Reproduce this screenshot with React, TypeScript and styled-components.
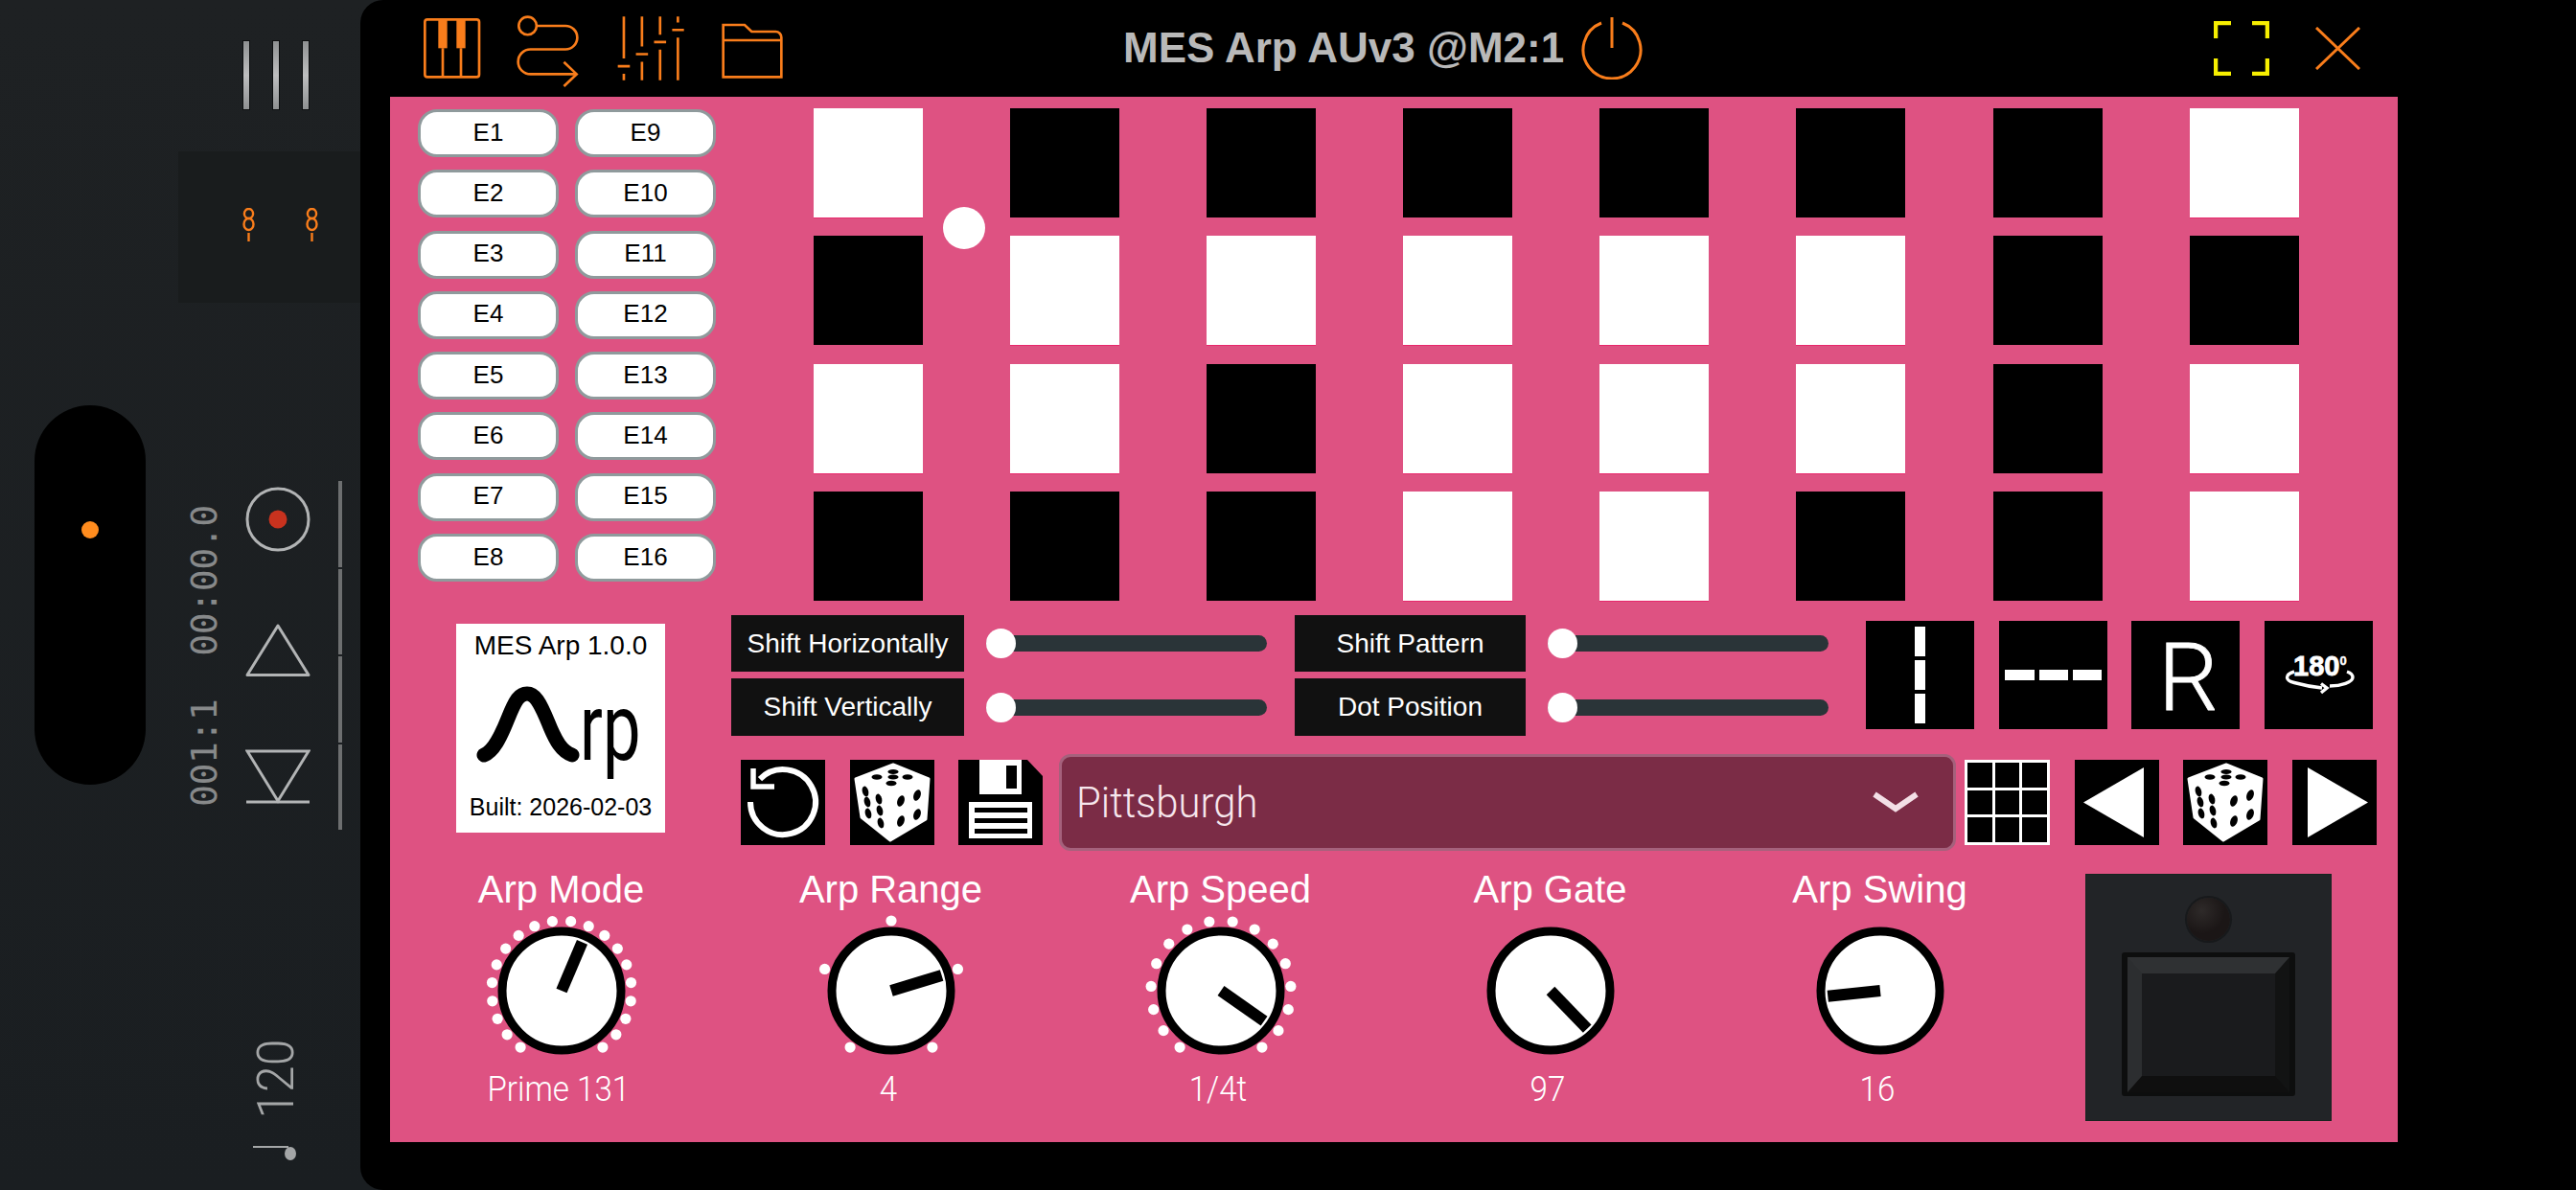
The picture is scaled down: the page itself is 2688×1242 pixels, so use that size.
import styled, { createGlobalStyle } from 'styled-components';

const PINK = '#de5282';
const ORANGE = '#f97d1b';

const GlobalStyle = createGlobalStyle`
  html, body {
    margin: 0;
    width: 2688px;
    height: 1242px;
    overflow: hidden;
    background: #1c2023;
    font-family: "Liberation Sans", Arial, sans-serif;
  }
`;

const PATTERN = ['WBBBBBBW', 'BWWWWWBB', 'WWBWWWBW', 'BBBWWBBW'];

const KNOBS = [
  { title: 'Arp Mode', value: 'Prime 131', angle: 23, dots: 20 },
  { title: 'Arp Range', value: '4', angle: 73, dots: 5 },
  { title: 'Arp Speed', value: '1/4t', angle: 125, dots: 16 },
  { title: 'Arp Gate', value: '97', angle: 136, dots: 0 },
  { title: 'Arp Swing', value: '16', angle: -96, dots: 0 },
];

const Knob = ({ angle, dots }: { angle: number; dots: number }) => {
  const spots = Array.from({ length: dots }, (_, i) => {
    const a = ((-144 + (288 * i) / (dots - 1)) * Math.PI) / 180;
    return { x: 73 * Math.sin(a), y: -73 * Math.cos(a) };
  });
  return (
    <svg width="160" height="160" viewBox="-80 -80 160 160">
      {spots.map(s => (
        <circle key={`${s.x}-${s.y}`} cx={s.x} cy={s.y} r="5.6" fill="#fff" />
      ))}
      <circle r="62" fill="#fff" stroke="#000" strokeWidth="9" />
      <rect x="-6" y="-55" width="12" height="55" fill="#000" transform={`rotate(${angle})`} />
    </svg>
  );
};

const Dice = () => (
  <svg width="88" height="89" viewBox="0 0 88 89">
    <path d="M45 5 L82 20 L79 62 L42 84 L12 60 L6 20 Z" fill="#fff" stroke="#fff" strokeWidth="3" strokeLinejoin="round" />
    <g fill="#000">
      <ellipse cx="28" cy="18" rx="5.5" ry="2.8" />
      <ellipse cx="45" cy="12.5" rx="5.5" ry="2.6" />
      <ellipse cx="45" cy="18" rx="5.5" ry="2.6" />
      <ellipse cx="60" cy="18" rx="5.5" ry="2.8" />
      <ellipse cx="43" cy="24.5" rx="5.5" ry="2.8" />
      <ellipse cx="16" cy="33" rx="3.2" ry="5.5" transform="rotate(-15 16 33)" />
      <ellipse cx="30" cy="41" rx="3.2" ry="5.5" transform="rotate(-15 30 41)" />
      <ellipse cx="18" cy="44" rx="3.2" ry="5.5" transform="rotate(-15 18 44)" />
      <ellipse cx="31" cy="53" rx="3.2" ry="5.5" transform="rotate(-15 31 53)" />
      <ellipse cx="19" cy="56" rx="3.2" ry="5.5" transform="rotate(-15 19 56)" />
      <ellipse cx="32" cy="66" rx="3.2" ry="5.5" transform="rotate(-15 32 66)" />
      <ellipse cx="70" cy="37" rx="3.6" ry="6" transform="rotate(20 70 37)" />
      <ellipse cx="53" cy="43" rx="3.6" ry="6" transform="rotate(20 53 43)" />
      <ellipse cx="70" cy="57" rx="3.6" ry="6" transform="rotate(20 70 57)" />
      <ellipse cx="53" cy="64" rx="3.6" ry="6" transform="rotate(20 53 64)" />
    </g>
  </svg>
);

const LoopIcon = () => (
  <svg width="13" height="35" viewBox="0 0 13 35" fill="none" stroke={ORANGE} strokeWidth="2.4">
    <ellipse cx="6.5" cy="6" rx="4.6" ry="5" />
    <ellipse cx="6.5" cy="17" rx="5" ry="6" />
    <path d="M6.5 26 V35" />
  </svg>
);

const App = () => {
  return (
    <Page>
      <GlobalStyle />
      <Sidebar>
        <PillColumn>
          <Pill>
            <PillDot />
          </Pill>
        </PillColumn>
        <SideColumn>
          <HandleBars>
            <HandleBar />
            <HandleBar />
            <HandleBar />
          </HandleBars>
          <LoopBox>
            <LoopIcon />
            <LoopIcon />
          </LoopBox>
          <TransportRow>
            <TimeText>{'001:1  00:00.0'}</TimeText>
            <TransportIcons>
              <svg width="68" height="68" viewBox="0 0 68 68" fill="none" stroke="#b2b4b5" strokeWidth="3">
                <circle cx="34" cy="34" r="32" />
                <circle cx="34" cy="34" r="9.5" fill="#c8321e" stroke="none" />
              </svg>
              <svg width="68" height="56" viewBox="0 0 68 56" fill="none" stroke="#b2b4b5" strokeWidth="3">
                <path d="M34 2 L66 53.5 H2 Z" strokeLinejoin="round" />
              </svg>
              <svg width="68" height="57" viewBox="0 0 68 57" fill="none" stroke="#b2b4b5" strokeWidth="3">
                <path d="M2 2 H66 L34 54 Z" />
                <path d="M1 55 H67" />
              </svg>
            </TransportIcons>
            <TrackLine>
              <TrackSegment />
              <TrackSegment />
              <TrackSegment />
              <TrackSegment />
            </TrackLine>
          </TransportRow>
          <Tempo>
            <TempoText>120</TempoText>
            <svg width="46" height="16" viewBox="0 0 46 16" fill="#a4a6a7">
              <rect x="0" y="0" width="37" height="2" />
              <ellipse cx="39" cy="8" rx="6" ry="7" />
            </svg>
          </Tempo>
        </SideColumn>
      </Sidebar>

      <Plugin>
        <Header>
          <HeaderIcon $left={64} $top={17}>
            <svg width="64" height="66" viewBox="30 28 192 198" fill="none" stroke={ORANGE} strokeWidth="8">
              <rect x="40" y="38" width="170" height="180" rx="8" />
              <rect x="82" y="38" width="28" height="90" fill={ORANGE} stroke="none" />
              <rect x="139" y="38" width="28" height="90" fill={ORANGE} stroke="none" />
              <path d="M96 128 V218 M153 128 V218" />
            </svg>
          </HeaderIcon>
          <HeaderIcon $left={33} $top={14}>
            <svg width="68" height="79" viewBox="320 18 205 236" fill="none" stroke={ORANGE} strokeWidth="8">
              <circle cx="361" cy="56" r="28" />
              <path d="M389 56 H480 a37 37 0 0 1 0 74 H370 a39 39 0 0 0 0 78 H515" />
              <path d="M475 170 L515 208 L475 246" />
            </svg>
          </HeaderIcon>
          <HeaderIcon $left={38} $top={15}>
            <svg width="73" height="71" viewBox="640 22 220 212" fill="none" stroke={ORANGE} strokeWidth="8">
              <path d="M664 28 V160 M645 184 H683 M664 208 V228" />
              <path d="M721 28 V122 M702 146 H740 M721 170 V228" />
              <path d="M778 28 V85 M759 108 H797 M778 132 V228" />
              <path d="M834 28 V47 M816 70 H853 M834 94 V228" />
            </svg>
          </HeaderIcon>
          <HeaderIcon $left={36} $top={23}>
            <svg width="66" height="60" viewBox="968 46 198 180" fill="none" stroke={ORANGE} strokeWidth="8">
              <path d="M976 218 V55 H1043 L1065 76 H1140 a18 18 0 0 1 18 18 V218 Z" />
              <path d="M976 103 H1158" />
            </svg>
          </HeaderIcon>
          <HeaderTitle>MES Arp AUv3 @M2:1</HeaderTitle>
          <HeaderIcon $left={18} $top={17}>
            <svg width="64" height="66" viewBox="0 0 64 66" fill="none" stroke={ORANGE} strokeWidth="3">
              <path d="M21 7 A30 30 0 1 0 43 7" />
              <path d="M32 1 V33" />
            </svg>
          </HeaderIcon>
          <HeaderIcon $left={596} $top={22}>
            <svg width="58" height="57" viewBox="0 0 58 57" fill="none" stroke="#f6ee00" strokeWidth="4.5">
              <path d="M2 18 V2 H18 M40 2 H56 V18 M56 39 V55 H40 M18 55 H2 V39" />
            </svg>
          </HeaderIcon>
          <HeaderIcon $left={48} $top={28}>
            <svg width="47" height="45" viewBox="0 0 47 45" fill="none" stroke={ORANGE} strokeWidth="3">
              <path d="M1 1 L46 44 M46 1 L1 44" />
            </svg>
          </HeaderIcon>
        </Header>

        <Panel>
          <TopRow>
            <EffectGrid>
              {Array.from({ length: 8 }, (_, row) => (
                <Effects key={row}>
                  <EffectButton>E{row + 1}</EffectButton>
                  <EffectButton>E{row + 9}</EffectButton>
                </Effects>
              ))}
            </EffectGrid>
            <StepGrid>
              {PATTERN.join('').split('').map((cell, i) => (
                <Step key={i} $on={cell === 'W'} />
              ))}
              <StepDot />
            </StepGrid>
          </TopRow>

          <MiddleRow>
            <InfoCard>
              <InfoLine>MES Arp 1.0.0</InfoLine>
              <LogoRow>
                <svg width="110" height="84" viewBox="0 0 110 84" fill="none" stroke="#000" strokeWidth="15" strokeLinecap="round">
                  <path d="M8 73 C18 69 25 55 33 35 C41 15 45 9 53 9 C61 9 66 17 75 39 C83 59 89 69 100 73" />
                </svg>
                <LogoText>rp</LogoText>
              </LogoRow>
              <BuiltLine>Built: 2026-02-03</BuiltLine>
            </InfoCard>

            <Controls>
              <ShiftRow>
                <ShiftGroup>
                  <ShiftLine>
                    <ShiftLabel $width={243}>Shift Horizontally</ShiftLabel>
                    <Track>
                      <Thumb />
                    </Track>
                  </ShiftLine>
                  <ShiftLine>
                    <ShiftLabel $width={243}>Shift Vertically</ShiftLabel>
                    <Track>
                      <Thumb />
                    </Track>
                  </ShiftLine>
                </ShiftGroup>
                <ShiftGroup>
                  <ShiftLine>
                    <ShiftLabel $width={241}>Shift Pattern</ShiftLabel>
                    <Track>
                      <Thumb />
                    </Track>
                  </ShiftLine>
                  <ShiftLine>
                    <ShiftLabel $width={241}>Dot Position</ShiftLabel>
                    <Track>
                      <Thumb />
                    </Track>
                  </ShiftLine>
                </ShiftGroup>
                <BigButtons>
                  <BigButton>
                    <svg width="113" height="113" viewBox="0 0 113 113" fill="#fff">
                      <rect x="51" y="6" width="11" height="31" />
                      <rect x="51" y="41" width="11" height="31" />
                      <rect x="51" y="76" width="11" height="31" />
                    </svg>
                  </BigButton>
                  <BigButton>
                    <svg width="113" height="113" viewBox="0 0 113 113" fill="#fff">
                      <rect x="6" y="51" width="31" height="11" />
                      <rect x="42" y="51" width="30" height="11" />
                      <rect x="77" y="51" width="30" height="11" />
                    </svg>
                  </BigButton>
                  <BigButton>
                    <BigLetter>R</BigLetter>
                  </BigButton>
                  <BigButton>
                    <svg width="113" height="113" viewBox="0 0 113 113">
                      <text
                        x="30"
                        y="57"
                        fill="#fff"
                        stroke="#fff"
                        strokeWidth="0.8"
                        fontFamily="Liberation Sans, Arial, sans-serif"
                        fontWeight="700"
                        fontSize="29"
                      >
                        180
                        <tspan fontSize="13" dy="-11" strokeWidth="0.4">0</tspan>
                      </text>
                      <path
                        d="M31 53 C21 56 21 62 31 64.5 C40 67 50 69 60 70 M59 65.5 L65 70 L59 75 M68 68 C80 68 92 64 92 59 C92 56 89 54 86 53"
                        fill="none"
                        stroke="#fff"
                        strokeWidth="3.4"
                      />
                    </svg>
                  </BigButton>
                </BigButtons>
              </ShiftRow>

              <PresetRow>
                <PresetButtons $left={10}>
                  <SmallButton>
                    <svg width="88" height="89" viewBox="0 0 88 89" fill="none" stroke="#fff" strokeWidth="6">
                      <path d="M10 44 A34 34 0 1 0 20 20" />
                      <path d="M13 9 V28 H35" strokeWidth="5.5" />
                    </svg>
                  </SmallButton>
                  <SmallButton>
                    <Dice />
                  </SmallButton>
                  <SmallButton $floppy>
                    <svg width="88" height="89" viewBox="0 0 88 89">
                      <path d="M0 0 H72 L88 17 V89 H0 Z" fill="#000" />
                      <rect x="22" y="0" width="44" height="36" fill="#fff" />
                      <rect x="50" y="6" width="11" height="24" fill="#000" />
                      <rect x="11" y="44" width="66" height="38" fill="#fff" />
                      <rect x="17" y="50" width="55" height="5" fill="#000" />
                      <rect x="17" y="61" width="55" height="5" fill="#000" />
                      <rect x="17" y="72" width="55" height="5" fill="#000" />
                    </svg>
                  </SmallButton>
                </PresetButtons>
                <Dropdown>
                  <DropdownText>Pittsburgh</DropdownText>
                  <svg width="48" height="22" viewBox="0 0 48 22" fill="none" stroke="#f3dfe6" strokeWidth="6">
                    <path d="M2 3 L24 18 L46 3" />
                  </svg>
                </Dropdown>
                <PresetButtons $left={0}>
                  <GridButton>
                    {Array.from({ length: 9 }, (_, i) => (
                      <GridCell key={i} />
                    ))}
                  </GridButton>
                  <SmallButton>
                    <svg width="88" height="89" viewBox="0 0 88 89" fill="#fff">
                      <path d="M72 8 V81 L9 44.5 Z" />
                    </svg>
                  </SmallButton>
                  <SmallButton>
                    <Dice />
                  </SmallButton>
                  <SmallButton>
                    <svg width="88" height="89" viewBox="0 0 88 89" fill="#fff">
                      <path d="M16 8 V81 L79 44.5 Z" />
                    </svg>
                  </SmallButton>
                </PresetButtons>
              </PresetRow>
            </Controls>
          </MiddleRow>

          <BottomRow>
            {KNOBS.map(knob => (
              <KnobColumn key={knob.title}>
                <KnobTitle>{knob.title}</KnobTitle>
                <Knob angle={knob.angle} dots={knob.dots} />
                <KnobValue>{knob.value}</KnobValue>
              </KnobColumn>
            ))}
            <FootSwitch>
              <Led />
              <PedalFrame>
                <Pedal />
              </PedalFrame>
            </FootSwitch>
          </BottomRow>
        </Panel>
      </Plugin>
    </Page>
  );
};

const Page = styled.div`
  display: flex;
  width: 2688px;
  height: 1242px;
  background: linear-gradient(#1e2123, #1a1e21);
`;

const Sidebar = styled.aside`
  display: flex;
  width: 376px;
  flex-shrink: 0;
`;

const PillColumn = styled.div`
  width: 186px;
  padding: 423px 0 0 36px;
  box-sizing: border-box;
`;

const Pill = styled.div`
  display: flex;
  justify-content: center;
  width: 116px;
  height: 396px;
  padding-top: 121px;
  box-sizing: border-box;
  border-radius: 58px;
  background: #000;
`;

const PillDot = styled.div`
  width: 18px;
  height: 18px;
  border-radius: 50%;
  background: #ff8c1e;
`;

const SideColumn = styled.div`
  display: flex;
  flex-direction: column;
  width: 190px;
`;

const HandleBars = styled.div`
  display: flex;
  gap: 25px;
  margin: 43px 0 0 68px;
`;

const HandleBar = styled.div`
  width: 6px;
  height: 71px;
  background: linear-gradient(#8f9192, #bdbebf 50%, #8f9192);
  box-shadow: 0 0 0 1px #0d0f10;
`;

const LoopBox = styled.div`
  display: flex;
  justify-content: flex-start;
  gap: 53px;
  height: 158px;
  margin-top: 44px;
  padding: 59px 0 0 67px;
  box-sizing: border-box;
  background: #191c1d;
`;

const TransportRow = styled.div`
  display: flex;
  margin-top: 186px;
  height: 364px;
`;

const TimeText = styled.div`
  margin: 25px 0 0 10px;
  width: 34px;
  height: 315px;
  writing-mode: vertical-rl;
  transform: rotate(180deg);
  font-family: "DejaVu Sans Mono", monospace;
  font-size: 38px;
  line-height: 34px;
  letter-spacing: -0.4px;
  white-space: pre;
  color: #87898a;
`;

const TransportIcons = styled.div`
  display: flex;
  flex-direction: column;
  gap: 75px;
  margin: 6px 0 0 26px;
`;

const TrackLine = styled.div`
  display: flex;
  flex-direction: column;
  gap: 2px;
  margin-left: 29px;
`;

const TrackSegment = styled.div`
  width: 4px;
  height: 89.5px;
  background: #6d6f70;
`;

const Tempo = styled.div`
  display: flex;
  flex-direction: column;
  align-items: flex-start;
  gap: 26px;
  margin: 216px 0 0 78px;
`;

const TempoText = styled.div`
  margin-left: 3px;
  writing-mode: vertical-rl;
  transform: rotate(180deg) scaleY(0.94);
  font-family: Roboto, sans-serif;
  font-weight: 300;
  font-size: 53px;
  line-height: 42px;
  color: #a4a6a7;
`;

const Plugin = styled.main`
  flex: 1;
  border-radius: 24px 0 0 24px;
  background: #000;
`;

const Header = styled.header`
  display: flex;
  align-items: flex-start;
  height: 101px;
`;

const HeaderIcon = styled.div<{ $left: number; $top: number }>`
  display: flex;
  margin-left: ${({ $left }) => $left}px;
  margin-top: ${({ $top }) => $top}px;
`;

const HeaderTitle = styled.h1`
  margin: 25px 0 0 354px;
  font-size: 44px;
  line-height: 50px;
  font-weight: 700;
  white-space: nowrap;
  color: #b9b9b9;
`;

const Panel = styled.section`
  width: 2095px;
  height: 1091px;
  margin-left: 31px;
  background: ${PINK};
`;

const TopRow = styled.div`
  display: flex;
  padding: 12px 0 0 29px;
`;

const EffectGrid = styled.div`
  display: flex;
  flex-direction: column;
  gap: 13.3px;
  padding-top: 1px;
`;

const Effects = styled.div`
  display: flex;
  gap: 17px;
`;

const EffectButton = styled.div`
  display: flex;
  align-items: center;
  justify-content: center;
  width: 147px;
  height: 50px;
  padding-bottom: 2px;
  box-sizing: border-box;
  border: 3px solid #8f9a9c;
  border-radius: 20px;
  background: #fff;
  font-size: 26px;
  color: #000;
`;

const StepGrid = styled.div`
  position: relative;
  display: grid;
  grid-template-columns: repeat(8, 114px);
  grid-auto-rows: 114px;
  column-gap: 91.1px;
  row-gap: 19.33px;
  margin-left: 102px;
`;

const Step = styled.div<{ $on: boolean }>`
  background: ${({ $on }) => ($on ? '#fff' : '#000')};
  box-shadow: ${({ $on }) => ($on ? '0 1px 0 #e8276b' : 'none')};
`;

const StepDot = styled.div`
  position: absolute;
  left: 135px;
  top: 103px;
  width: 44px;
  height: 44px;
  border-radius: 50%;
  background: #fff;
`;

const MiddleRow = styled.div`
  display: flex;
  padding: 15px 0 0 69px;
`;

const InfoCard = styled.div`
  display: flex;
  flex-direction: column;
  align-items: center;
  width: 218px;
  height: 218px;
  margin-top: 9px;
  padding-top: 6px;
  box-sizing: border-box;
  background: #fff;
  color: #000;
`;

const InfoLine = styled.div`
  font-size: 28px;
  line-height: 34px;
  white-space: nowrap;
`;

const LogoRow = styled.div`
  display: flex;
  align-items: flex-start;
  width: 176px;
  height: 94px;
  margin-top: 24px;
`;

const LogoText = styled.span`
  margin: -2px 0 0 -2px;
  width: 66px;
  font-family: Roboto, sans-serif;
  font-weight: 400;
  font-size: 98px;
  line-height: 94px;
  transform: scaleX(0.72);
  transform-origin: left top;
`;

const BuiltLine = styled.div`
  margin-top: 18px;
  font-size: 25px;
  line-height: 30px;
  white-space: nowrap;
`;

const Controls = styled.div`
  display: flex;
  flex-direction: column;
  margin-left: 69px;
`;

const ShiftRow = styled.div`
  display: flex;
  align-items: flex-start;
  height: 126px;
`;

const ShiftGroup = styled.div`
  display: flex;
  flex-direction: column;
  gap: 7px;
  margin-right: 29px;
`;

const ShiftLine = styled.div`
  display: flex;
  align-items: center;
  gap: 23px;
`;

const ShiftLabel = styled.div<{ $width: number }>`
  display: flex;
  align-items: center;
  justify-content: center;
  width: ${({ $width }) => $width}px;
  height: 59.5px;
  background: #111;
  font-size: 28px;
  color: #fff;
  white-space: nowrap;
`;

const Track = styled.div`
  position: relative;
  width: 293px;
  height: 17px;
  border-radius: 9px;
  background: #2a3438;
`;

const Thumb = styled.div`
  position: absolute;
  left: 0;
  top: -7px;
  width: 31px;
  height: 31px;
  border-radius: 50%;
  background: #fff;
`;

const BigButtons = styled.div`
  display: flex;
  gap: 25.5px;
  margin: 6px 0 0 10px;
`;

const BigButton = styled.div`
  display: flex;
  align-items: center;
  justify-content: center;
  width: 113px;
  height: 113px;
  background: #000;
`;

const BigLetter = styled.span`
  margin: 6px 0 0 6px;
  font-family: Roboto, sans-serif;
  font-weight: 300;
  font-size: 99px;
  line-height: 100px;
  color: #fff;
  -webkit-text-stroke: 0.8px #fff;
`;

const PresetRow = styled.div`
  display: flex;
  align-items: center;
  height: 101px;
  margin-top: 19px;
`;

const PresetButtons = styled.div<{ $left: number }>`
  display: flex;
  gap: 25.5px;
  margin-left: ${({ $left }) => $left}px;
`;

const SmallButton = styled.div<{ $floppy?: boolean }>`
  display: flex;
  width: 88px;
  height: 89px;
  background: ${({ $floppy }) => ($floppy ? 'transparent' : '#000')};
`;

const Dropdown = styled.div`
  display: flex;
  align-items: center;
  justify-content: space-between;
  width: 936px;
  height: 101px;
  margin: 0 9px 0 17px;
  padding: 0 36px 0 15px;
  box-sizing: border-box;
  border: 3px solid #a5617c;
  border-radius: 12px;
  background: #7b2c46;
`;

const DropdownText = styled.span`
  font-family: Roboto, sans-serif;
  font-weight: 300;
  font-size: 45px;
  color: #f6e6ec;
  transform: scaleX(0.93);
  transform-origin: left center;
`;

const GridButton = styled.div`
  display: grid;
  grid-template-columns: repeat(3, 1fr);
  grid-template-rows: repeat(3, 1fr);
  gap: 3px;
  width: 89px;
  height: 89px;
  padding: 3px;
  box-sizing: border-box;
  background: #fff;
`;

const GridCell = styled.div`
  background: #000;
`;

const BottomRow = styled.div`
  display: flex;
  align-items: flex-start;
  padding-left: 6.5px;
`;

const KnobColumn = styled.div`
  display: flex;
  flex-direction: column;
  align-items: center;
  width: 344px;
  padding-top: 17px;
`;

const KnobTitle = styled.div`
  margin-bottom: 3.5px;
  font-size: 40px;
  line-height: 46px;
  color: #fff;
`;

const KnobValue = styled.div`
  margin: 3px 6px 0 0;
  font-family: Roboto, sans-serif;
  font-weight: 300;
  font-size: 36px;
  line-height: 40px;
  color: #fff;
  transform: scaleX(0.92);
`;

const FootSwitch = styled.div`
  display: flex;
  flex-direction: column;
  align-items: center;
  width: 255px;
  height: 256px;
  margin: 25px 0 0 43.5px;
  padding-top: 24px;
  box-sizing: border-box;
  background: #222427;
  box-shadow: 0 0 0 1px #172420;
`;

const Led = styled.div`
  width: 45px;
  height: 45px;
  border-radius: 50%;
  background: radial-gradient(circle at 35% 30%, #2e2a29, #1b1616 55%);
  box-shadow: 0 0 0 2px #17191b;
`;

const PedalFrame = styled.div`
  width: 181px;
  height: 150px;
  margin-top: 12px;
  padding: 5px 6px 4px;
  box-sizing: border-box;
  border-radius: 3px;
  background: #0d0e0e;
`;

const Pedal = styled.div`
  height: 141px;
  box-sizing: border-box;
  background: #1a1b1d;
  border-style: solid;
  border-width: 17px 15px;
  border-color: #2f3133 #121313 #0f0f0f #2c2e30;
`;

export default App;
